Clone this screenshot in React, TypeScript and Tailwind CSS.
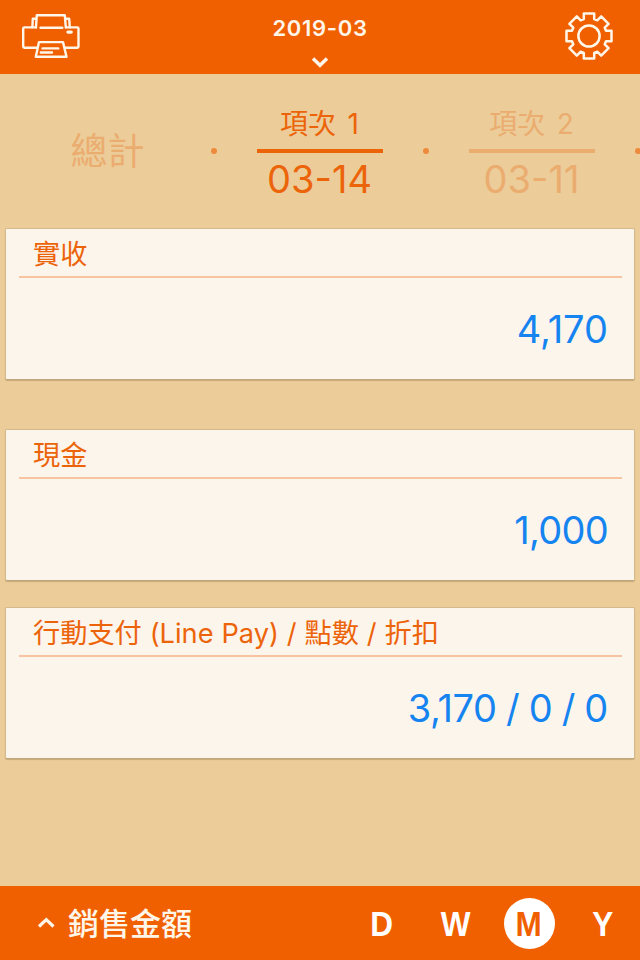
interface Term {
  label: string
  date?: string
  active?: boolean
}

interface Summary {
  title: string
  value: string
  spacing: string
  valueClass: string
}

const terms: Term[] = [
  { label: "總計" },
  { label: "項次 1", date: "03-14", active: true },
  { label: "項次 2", date: "03-11" },
]

const summaries: Summary[] = [
  { title: "實收", value: "4,170", spacing: "mb-[49px]", valueClass: "" },
  { title: "現金", value: "1,000", spacing: "mb-[26px]", valueClass: "tracking-[-0.7px]" },
  {
    title: "行動支付 (Line Pay) / 點數 / 折扣",
    value: "3,170 / 0 / 0",
    spacing: "",
    valueClass: "tracking-[-0.35px] [word-spacing:-1px]",
  },
]

const periods = ["D", "W", "M", "Y"]

function PrinterIcon() {
  return (
    <svg
      width="60"
      height="48"
      viewBox="21 12 60 48"
      fill="none"
      stroke="#fff6ea"
      strokeWidth="2.4"
      strokeLinecap="round"
      strokeLinejoin="round"
    >
      <path d="M36 27.3 36.8 15.2H64.8L65.8 27.3" />
      <path d="M40.5 27.7H62.3" />
      <path d="M36 18.8H32.8L32.4 27.3M65.6 18.8H69.2L69.8 27.3" />
      <path d="M36 27.4H24.4Q23.2 27.4 23.2 28.6V46.6Q23.2 47.8 24.4 47.8H37" />
      <path d="M66 27.4H77.3Q78.5 27.4 78.5 28.6V46.6Q78.5 47.8 77.3 47.8H65" />
      <path d="M39 42.1H63L66.5 56.8H35.8Z" />
      <path d="M42.5 48.4H58.3M40.8 52.5H52" />
      <path d="M68 32.1H71.2" strokeWidth="3.4" />
    </svg>
  )
}

function GearIcon() {
  return (
    <svg
      width="50"
      height="50"
      viewBox="-25 -25 50 50"
      fill="none"
      stroke="#fff6ea"
      strokeWidth="2.5"
      strokeLinejoin="round"
    >
      <path d="M-5.2-17V-22.5H5.2V-17L8.3-15.7 12.2-19.6 19.6-12.2 15.7-8.3 17-5.2H22.5V5.2H17L15.7 8.3 19.6 12.2 12.2 19.6 8.3 15.7 5.2 17V22.5H-5.2V17L-8.3 15.7-12.2 19.6-19.6 12.2-15.7 8.3-17 5.2H-22.5V-5.2H-17L-15.7-8.3-19.6-12.2-12.2-19.6-8.3-15.7Z" />
      <circle r="10.6" />
    </svg>
  )
}

function Header() {
  return (
    <header className="flex h-[74px] shrink-0 items-start justify-between bg-[#f06000] pl-[21px] pr-[26px] text-[#fff6ea]">
      <div className="w-[60px] pt-3">
        <PrinterIcon />
      </div>
      <div className="flex flex-col items-center pr-[5px] pt-[15px]">
        <span className="text-[22px] font-semibold leading-[26px] tracking-[0.7px]">2019-03</span>
        <svg
          className="mt-[15px]"
          width="18"
          height="12"
          fill="none"
          stroke="currentColor"
          strokeWidth="3.4"
        >
          <path d="M2 2.5 9 9.3 16 2.5" />
        </svg>
      </div>
      <div className="w-[50px] pt-[10.5px]">
        <GearIcon />
      </div>
    </header>
  )
}

function TermTab({ label, date, active }: Term) {
  if (!date) {
    return (
      <div className="w-[126px] shrink-0 pt-0.5 text-center text-[37px] leading-[54px] text-[#ebac70]">
        {label}
      </div>
    )
  }
  return (
    <div
      className={`flex w-[126px] shrink-0 flex-col items-center ${
        active ? "text-[#ec640a]" : "text-[#ebac70]"
      }`}
    >
      <span className="h-[50px] text-[28px] leading-[51px] [word-spacing:3.5px]">{label}</span>
      <div className="h-1 w-full bg-current" />
      <span className="h-[50px] text-[38px] leading-[52px]">{date}</span>
    </div>
  )
}

function Terms() {
  return (
    <nav className="flex h-[154px] shrink-0 items-center overflow-hidden pl-[44.5px]">
      {terms.map((term) => (
        <div key={term.label} className="flex shrink-0 items-center">
          <TermTab {...term} />
          <div className="mx-10 size-1.5 shrink-0 rounded-full bg-[#ee8a3c]" />
        </div>
      ))}
    </nav>
  )
}

function SummaryCard({ title, value, spacing, valueClass }: Summary) {
  return (
    <section
      className={`h-[152px] rounded-[2px] border border-[#d3b98c] border-b-[#bfa67c] bg-[#fcf5eb] pl-[13px] pr-3 shadow-[0_1px_1px_rgba(120,90,40,0.3)] ${spacing}`}
    >
      <h2 className="h-[49px] whitespace-nowrap border-b-2 border-[#f7c3a0] pl-3.5 text-[27.2px] leading-[51px] text-[#ec640a] [word-spacing:0.3px]">
        {title}
      </h2>
      <p
        className={`pr-3.5 text-right text-[38px] leading-[102px] text-[#1584f0] ${valueClass}`}
      >
        {value}
      </p>
    </section>
  )
}

function Footer() {
  return (
    <footer className="flex h-[74px] shrink-0 items-center justify-between bg-[#f06000] pl-[37px] pr-3 text-[#fff6ea]">
      <div className="flex items-center gap-[13px]">
        <svg width="18" height="12" fill="none" stroke="currentColor" strokeWidth="3.2">
          <path d="M2 9.5 9.3 2.7 16.5 9.5" />
        </svg>
        <span className="pt-0.5 text-[31px] font-medium leading-[48px]">銷售金額</span>
      </div>
      <div className="flex gap-[22.5px] font-['Liberation_Sans',Arial,sans-serif] text-[35px] font-bold text-white">
        {periods.map((period) => (
          <span
            key={period}
            className={`flex size-[51px] items-center justify-center rounded-full pt-[3px] ${
              period === "M" ? "bg-white text-[#f06000]" : ""
            }`}
          >
            <span className="inline-block scale-x-90">{period}</span>
          </span>
        ))}
      </div>
    </footer>
  )
}

export default function App() {
  return (
    <div className="flex h-[960px] w-[640px] flex-col overflow-hidden bg-[#eccd99] font-['Inter','Noto_Sans_CJK_TC',sans-serif]">
      <Header />
      <Terms />
      <main className="flex-1 px-[5px]">
        {summaries.map((summary) => (
          <SummaryCard key={summary.title} {...summary} />
        ))}
      </main>
      <Footer />
    </div>
  )
}
